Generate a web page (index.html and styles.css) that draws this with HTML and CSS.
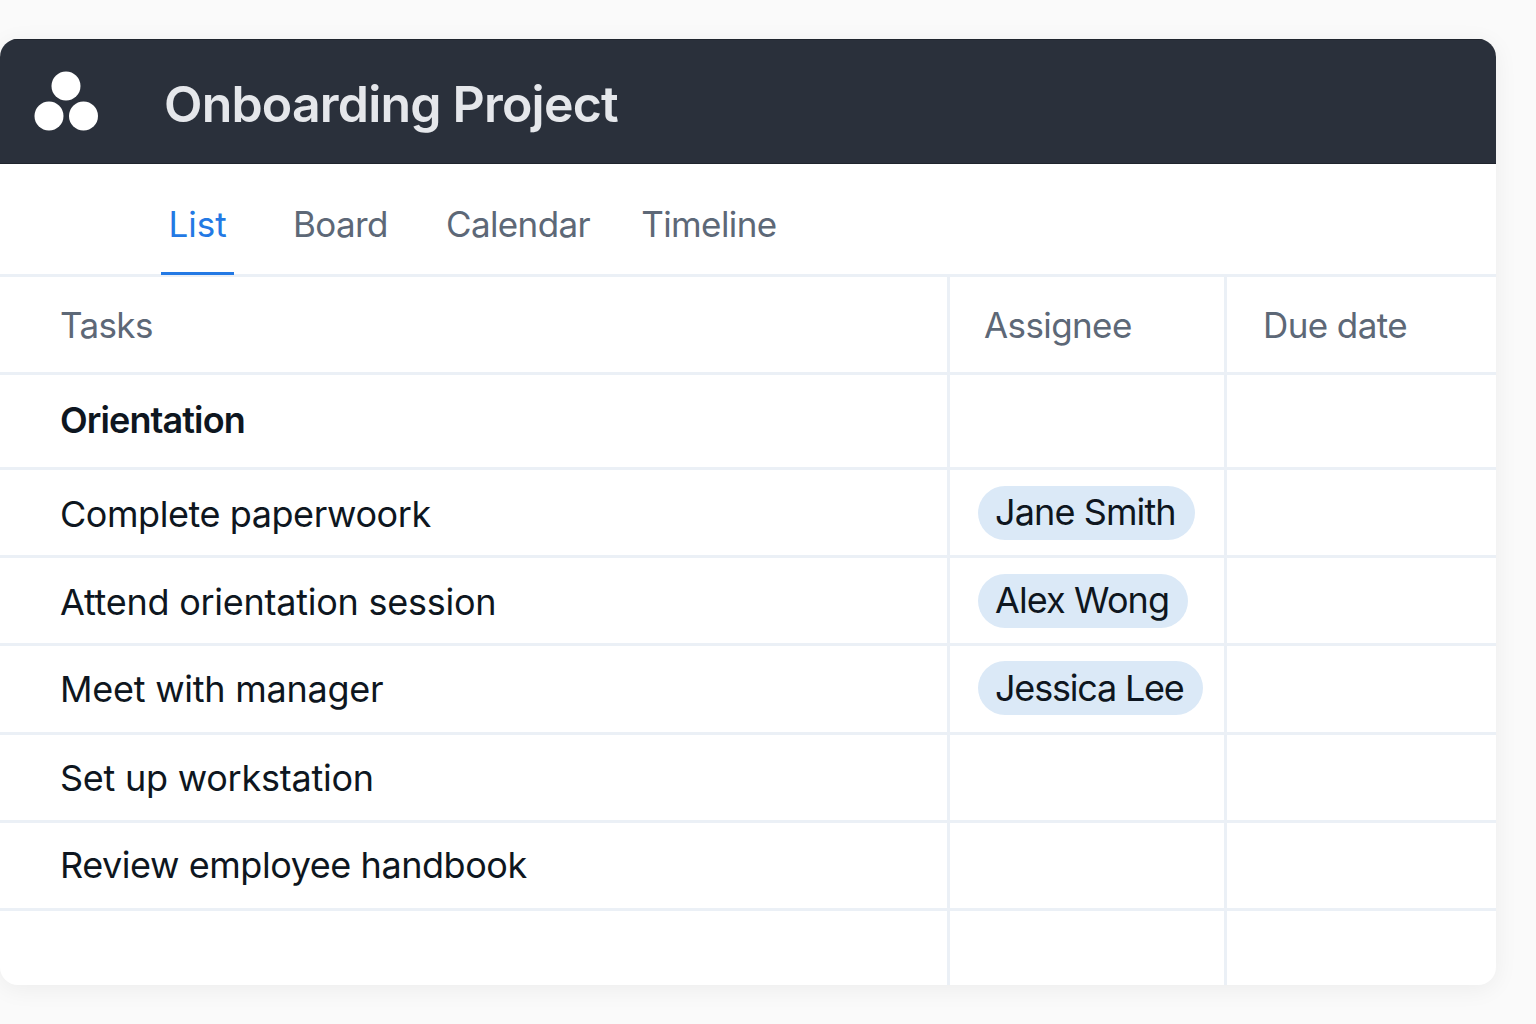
FILE: index.html
```html
<!DOCTYPE html>
<html lang="en">
<head>
<meta charset="utf-8">
<title>Onboarding Project</title>
<link rel="stylesheet" href="styles.css">
</head>
<body>
<main class="card">
  <header class="topbar">
    <svg class="logo" width="66" height="60" viewBox="0 0 66 60" aria-hidden="true">
      <circle cx="33" cy="15" r="14.5"/>
      <circle cx="16" cy="45" r="14.5"/>
      <circle cx="50.500" cy="45" r="14.5"/>
    </svg>
    <h1 class="title">Onboarding Project</h1>
  </header>
  <nav class="tabs">
    <a class="tab tab-list active">List</a>
    <a class="tab tab-board">Board</a>
    <a class="tab tab-calendar">Calendar</a>
    <a class="tab tab-timeline">Timeline</a>
  </nav>
  <section class="table">
    <div class="row head"><div class="cell">Tasks</div><div class="cell assignee">Assignee</div><div class="cell due">Due date</div></div>
    <div class="row section"><div class="cell"><strong>Orientation</strong></div><div class="cell"></div><div class="cell"></div></div>
    <div class="row"><div class="cell task-low">Complete paperwoork</div><div class="cell chip-cell"><span class="chip">Jane Smith</span></div><div class="cell"></div></div>
    <div class="row"><div class="cell task-low task-wide">Attend orientation session</div><div class="cell chip-cell"><span class="chip">Alex Wong</span></div><div class="cell"></div></div>
    <div class="row tall"><div class="cell task-wide">Meet with manager</div><div class="cell chip-cell"><span class="chip chip-tight">Jessica Lee</span></div><div class="cell"></div></div>
    <div class="row"><div class="cell task-wide">Set up workstation</div><div class="cell"></div><div class="cell"></div></div>
    <div class="row"><div class="cell task-high">Review employee handbook</div><div class="cell"></div><div class="cell"></div></div>
    <div class="row last"><div class="cell"></div><div class="cell"></div><div class="cell"></div></div>
  </section>
</main>
</body>
</html>
```

FILE: styles.css
```css
* { box-sizing: border-box; }
html, body { margin: 0; height: 100%; }
body {
  background: #fafafa;
  font-family: "Inter", "Liberation Sans", sans-serif;
  color: #0e1620;
  padding-top: 39px;
  overflow: hidden;
}
.card {
  width: 1496px;
  height: 946px;
  background: #fff;
  border-radius: 18px;
  overflow: hidden;
  box-shadow: 0 4px 24px rgba(0, 0, 0, 0.06);
  display: flex;
  flex-direction: column;
}
.topbar {
  height: 125px;
  background: #2a303b;
  border-top: 1px solid #1f242d;
  border-bottom: 1px solid #1f242d;
  display: flex;
  align-items: center;
  padding-left: 33px;
  flex: none;
}
.logo { fill: #fff; margin-top: -2px; flex: none; }
.title {
  margin: 4px 0 0 65px;
  font-size: 50px;
  font-weight: 600;
  letter-spacing: -0.8px;
  color: #e5e7eb;
}
.tabs {
  height: 113px;
  flex: none;
  display: flex;
  padding-left: 161px;
  border-bottom: 3px solid #ebf0f6;
}
.tab {
  height: 111px;
  display: flex;
  align-items: center;
  justify-content: center;
  font-size: 35px;
  letter-spacing: -0.6px;
  color: #5d6877;
  padding-top: 12px;
  border-bottom: 3px solid transparent;
}
.tab-list { width: 73px; margin-right: 59px; letter-spacing: 0; }
.tab-board { margin-right: 58px; }
.tab-calendar { margin-right: 51px; }
.active { color: #2379e4; border-bottom-color: #2379e4; }
.table { flex: 1; display: flex; flex-direction: column; }
.row {
  display: grid;
  grid-template-columns: 950px 277px 1fr;
  height: 88px;
  border-bottom: 3px solid #ebf0f6;
  font-size: 36px;
  letter-spacing: -0.44px;
  flex: none;
}
.row.tall { height: 89px; }
.row.head { height: 98px; font-size: 35px; letter-spacing: -0.6px; color: #5d6877; }
.row.section { height: 95px; }
.row.last { flex: 1; border-bottom: 0; }
.cell {
  display: flex;
  align-items: center;
  padding-left: 60px;
  border-right: 3px solid #ebf0f6;
}
.cell:last-child { border-right: 0; }
.task-low { padding-top: 2px; }
.task-high { padding-bottom: 2px; }
.task-wide { letter-spacing: -0.25px; }
.assignee { padding-left: 34px; }
.due { padding-left: 36px; }
.chip-cell { padding-left: 28px; }
.chip {
  background: #dbe9f7;
  border-radius: 27px;
  height: 54px;
  padding: 0 19px 2px 18px;
  display: flex;
  align-items: center;
  margin-top: 1px;
  letter-spacing: -0.88px;
  white-space: nowrap;
  text-indent: -1px;
}
.chip-tight { letter-spacing: -1.2px; margin-top: -3px; padding-bottom: 0; }
strong { font-weight: 600; letter-spacing: -0.9px; padding-bottom: 2px; }
```
